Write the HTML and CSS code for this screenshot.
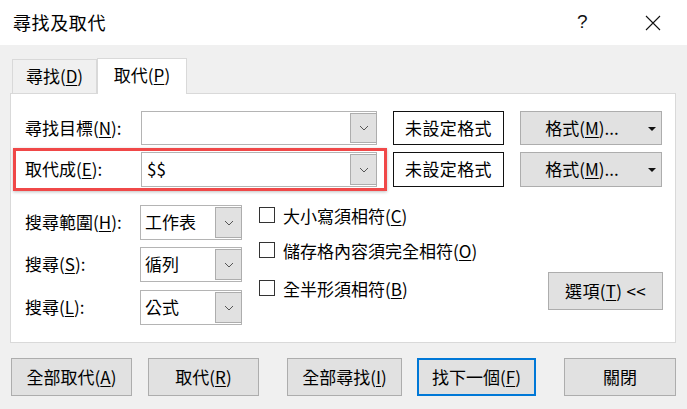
FILE: index.html
```html
<!DOCTYPE html>
<html lang="zh-Hant">
<head>
<meta charset="utf-8">
<link rel="stylesheet" href="styles.css">
</head>
<body>
<div class="dialog">
  <div class="titlebar">
    <div class="title">尋找及取代</div>
    <div class="help">?</div>
    <div class="close">
      <svg width="16" height="16" viewBox="0 0 16 16"><path d="M1 1 L15 15 M15 1 L1 15" stroke="#111" stroke-width="1.1" fill="none"/></svg>
    </div>
  </div>

  <div class="tabs">
    <div class="tab">尋找(<u>D</u>)</div>
    <div class="tab active">取代(<u>P</u>)</div>
  </div>

  <div class="panel">
    <div class="row">
      <div class="label">尋找目標(<u>N</u>):</div>
      <div class="combo wide"><span class="value"></span><span class="drop"><svg width="10" height="6" viewBox="0 0 10 6"><path d="M1 1 L5 5 L9 1" stroke="#555" stroke-width="1" fill="none"/></svg></span></div>
      <div class="fmtpreview">未設定格式</div>
      <div class="btn fmtbtn"><span>格式(<u>M</u>)...</span><span class="tri"></span></div>
    </div>
    <div class="row row2">
      <div class="label">取代成(<u>E</u>):</div>
      <div class="combo wide"><span class="value">$$</span><span class="drop"><svg width="10" height="6" viewBox="0 0 10 6"><path d="M1 1 L5 5 L9 1" stroke="#555" stroke-width="1" fill="none"/></svg></span></div>
      <div class="fmtpreview">未設定格式</div>
      <div class="btn fmtbtn"><span>格式(<u>M</u>)...</span><span class="tri"></span></div>
      <div class="highlight"></div>
    </div>

    <div class="lower">
      <div class="opts">
        <div class="orow">
          <div class="label small">搜尋範圍(<u>H</u>):</div>
          <div class="combo narrow"><span class="value">工作表</span><span class="drop"><svg width="10" height="6" viewBox="0 0 10 6"><path d="M1 1 L5 5 L9 1" stroke="#555" stroke-width="1" fill="none"/></svg></span></div>
        </div>
        <div class="orow o2">
          <div class="label small">搜尋(<u>S</u>):</div>
          <div class="combo narrow"><span class="value">循列</span><span class="drop"><svg width="10" height="6" viewBox="0 0 10 6"><path d="M1 1 L5 5 L9 1" stroke="#555" stroke-width="1" fill="none"/></svg></span></div>
        </div>
        <div class="orow o3">
          <div class="label small">搜尋(<u>L</u>):</div>
          <div class="combo narrow"><span class="value">公式</span><span class="drop"><svg width="10" height="6" viewBox="0 0 10 6"><path d="M1 1 L5 5 L9 1" stroke="#555" stroke-width="1" fill="none"/></svg></span></div>
        </div>
      </div>
      <div class="checks">
        <div class="check c1"><span class="box"></span>大小寫須相符(<u>C</u>)</div>
        <div class="check c2"><span class="box"></span>儲存格內容須完全相符(<u>O</u>)</div>
        <div class="check c3"><span class="box"></span>全半形須相符(<u>B</u>)</div>
      </div>
      <div class="btn optbtn">選項(<u>T</u>) &lt;&lt;</div>
    </div>
  </div>

  <div class="footer">
    <div class="btn b1">全部取代(<u>A</u>)</div>
    <div class="btn b2">取代(<u>R</u>)</div>
    <div class="btn b3">全部尋找(<u>I</u>)</div>
    <div class="btn b4 default">找下一個(<u>F</u>)</div>
    <div class="btn b5">關閉</div>
  </div>
</div>
</body>
</html>
```
FILE: styles.css
```css
* { box-sizing: border-box; }
html, body { margin: 0; padding: 0; }
body {
  width: 687px;
  height: 409px;
  overflow: hidden;
  background: #f0f0f0;
  font-family: "Noto Sans CJK TC", "Noto Sans", sans-serif;
  font-size: 17px;
  color: #000;
}
u { text-decoration: underline; text-underline-offset: 2px; text-decoration-thickness: 1px; }
.dialog { width: 687px; height: 409px; }

.titlebar {
  height: 45px;
  background: #fff;
  display: flex;
  align-items: center;
  padding-left: 13px;
}
.title { font-size: 18px; letter-spacing: 0.6px; line-height: 1; flex: 1; padding-bottom: 2px; }
.help { font-family: "Liberation Sans", sans-serif; font-size: 19px; width: 20px; margin-right: 48px; color: #111; padding-bottom: 2px; }
.close { width: 16px; height: 16px; margin-right: 26px; display: flex; }

.tabs {
  display: flex;
  align-items: flex-end;
  padding-left: 12px;
  height: 48px;
}
.tab {
  height: 34px;
  width: 85px;
  border: 1px solid #d9d9d9;
  border-bottom: none;
  background: #f0f0f0;
  display: flex;
  align-items: center;
  justify-content: center;
  line-height: 1;
  padding-bottom: 2px;
}
.tab.active {
  height: 36px;
  width: 90px;
  margin-bottom: -1px;
  background: #fff;
  position: relative;
  z-index: 1;
  padding-bottom: 5px;
}

.panel {
  margin-left: 10px;
  width: 666px;
  height: 250px;
  background: #fff;
  border: 1px solid #d9d9d9;
  padding: 17px 0 0 14px;
}
.row { display: flex; align-items: center; height: 34px; position: relative; }
.row2 { margin-top: 7px; height: 35px; }
.label { width: 116px; line-height: 1; padding-bottom: 2px; }
.label.small { width: 115px; }

.combo {
  height: 100%;
  border: 1px solid #b4b4b4;
  background: #fff;
  display: flex;
  align-items: stretch;
  padding: 1px 0 1px 0;
}
.combo .value { flex: 1; display: flex; align-items: center; padding-left: 5px; line-height: 1; padding-bottom: 2px; }
.combo .drop {
  width: 27px;
  margin-right: -1px;
  background: #e1e1e1;
  border: 1px solid #adadad;
  display: flex;
  align-items: center;
  justify-content: center;
}
.combo.wide { width: 236px; }
.combo.narrow { width: 102px; }
.combo.narrow .value { padding-left: 4px; }

.fmtpreview {
  margin-left: 16px;
  width: 111px;
  height: 34px;
  border: 1px solid #111;
  display: flex;
  align-items: center;
  justify-content: center;
  line-height: 1;
  padding-bottom: 2px;
  letter-spacing: 0.4px;
}
.row2 .fmtpreview { height: 35px; }

.btn {
  background: #e1e1e1;
  border: 1px solid #adadad;
  display: flex;
  align-items: center;
  justify-content: center;
  line-height: 1;
  padding-bottom: 2px;
}
.fmtbtn {
  margin-left: 16px;
  width: 142px;
  height: 34px;
  position: relative;
  padding-right: 18px;
}
.row2 .fmtbtn { height: 35px; }
.tri {
  position: absolute;
  right: 5px;
  top: 15px;
  width: 0; height: 0;
  border-left: 4px solid transparent;
  border-right: 4px solid transparent;
  border-top: 4px solid #111;
}

.highlight {
  position: absolute;
  left: -12px;
  top: -4px;
  width: 374px;
  height: 43px;
  border: 3px solid #f04848;
  box-shadow: 0 1px 3px rgba(0,0,0,0.25);
  pointer-events: none;
}

.lower { display: flex; margin-top: 18px; height: 121px; }
.opts { display: flex; flex-direction: column; }
.orow { display: flex; align-items: center; height: 35px; }
.o2 { margin-top: 7px; }
.o3 { margin-top: 8px; }

.checks { display: flex; flex-direction: column; margin-left: 17px; padding-top: 2px; }
.check { display: flex; align-items: center; height: 16px; line-height: 1; }
.c2 { margin-top: 19px; }
.c3 { margin-top: 22px; }
.box {
  width: 16px; height: 16px;
  border: 1px solid #333;
  background: #fff;
  margin-right: 8px;
  flex: none;
}

.optbtn {
  margin-left: auto;
  margin-right: 12px;
  align-self: flex-end;
  margin-bottom: 16px;
  width: 115px;
  height: 38px;
  letter-spacing: 0.3px;
}

.footer { display: flex; margin-top: 15px; padding-left: 11px; height: 38px; }
.footer .btn { height: 38px; }
.b1 { width: 121px; }
.b2 { width: 111px; margin-left: 16px; }
.b3 { width: 115px; margin-left: 28px; }
.b4 { width: 119px; margin-left: 15px; }
.b5 { width: 112px; margin-left: 28px; }
.default { border: 2px solid #0078d7; }
```
